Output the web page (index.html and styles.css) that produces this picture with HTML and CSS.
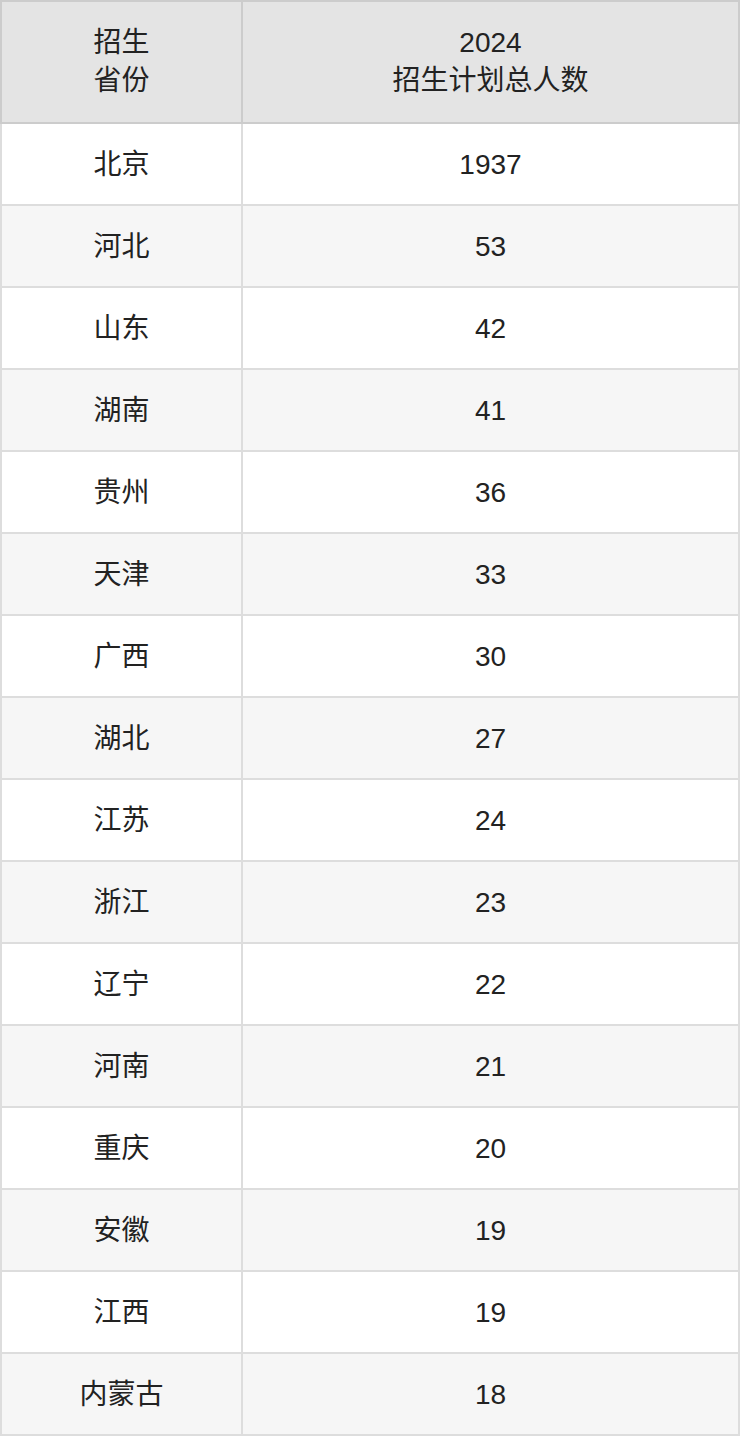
FILE: index.html
```html
<!DOCTYPE html>
<html lang="zh-CN">
<head>
<meta charset="utf-8">
<title>招生计划</title>
<link rel="stylesheet" href="styles.css">
</head>
<body>
<table class="plan">
  <thead>
    <tr><th class="c1">招生<br>省份</th><th class="c2">2024<br>招生计划总人数</th></tr>
  </thead>
  <tbody>
    <tr><td>北京</td><td>1937</td></tr>
    <tr><td>河北</td><td>53</td></tr>
    <tr><td>山东</td><td>42</td></tr>
    <tr><td>湖南</td><td>41</td></tr>
    <tr><td>贵州</td><td>36</td></tr>
    <tr><td>天津</td><td>33</td></tr>
    <tr><td>广西</td><td>30</td></tr>
    <tr><td>湖北</td><td>27</td></tr>
    <tr><td>江苏</td><td>24</td></tr>
    <tr><td>浙江</td><td>23</td></tr>
    <tr><td>辽宁</td><td>22</td></tr>
    <tr><td>河南</td><td>21</td></tr>
    <tr><td>重庆</td><td>20</td></tr>
    <tr><td>安徽</td><td>19</td></tr>
    <tr><td>江西</td><td>19</td></tr>
    <tr><td>内蒙古</td><td>18</td></tr>
  </tbody>
</table>
</body>
</html>
```

FILE: styles.css
```css
html, body {
  margin: 0;
  padding: 0;
  background: #ffffff;
}

.plan {
  width: 740px;
  border-collapse: collapse;
  table-layout: fixed;
  font-family: "Liberation Sans", "Noto Sans CJK SC", sans-serif;
  font-size: 28px;
  color: #222222;
}

.plan th,
.plan td {
  padding: 0;
  text-align: center;
  vertical-align: middle;
}

.plan th {
  font-weight: normal;
  background: #e4e4e4;
  border: 2px solid #cccccc;
  height: 120px;
  line-height: 38px;
}

.plan .c1 {
  width: 239px;
}

.plan td {
  border: 2px solid #dddddd;
  height: 78px;
  padding-top: 2px;
  line-height: 38px;
}

.plan tbody tr:nth-child(odd) td {
  background: #ffffff;
}

.plan tbody tr:nth-child(even) td {
  background: #f6f6f6;
}
```
